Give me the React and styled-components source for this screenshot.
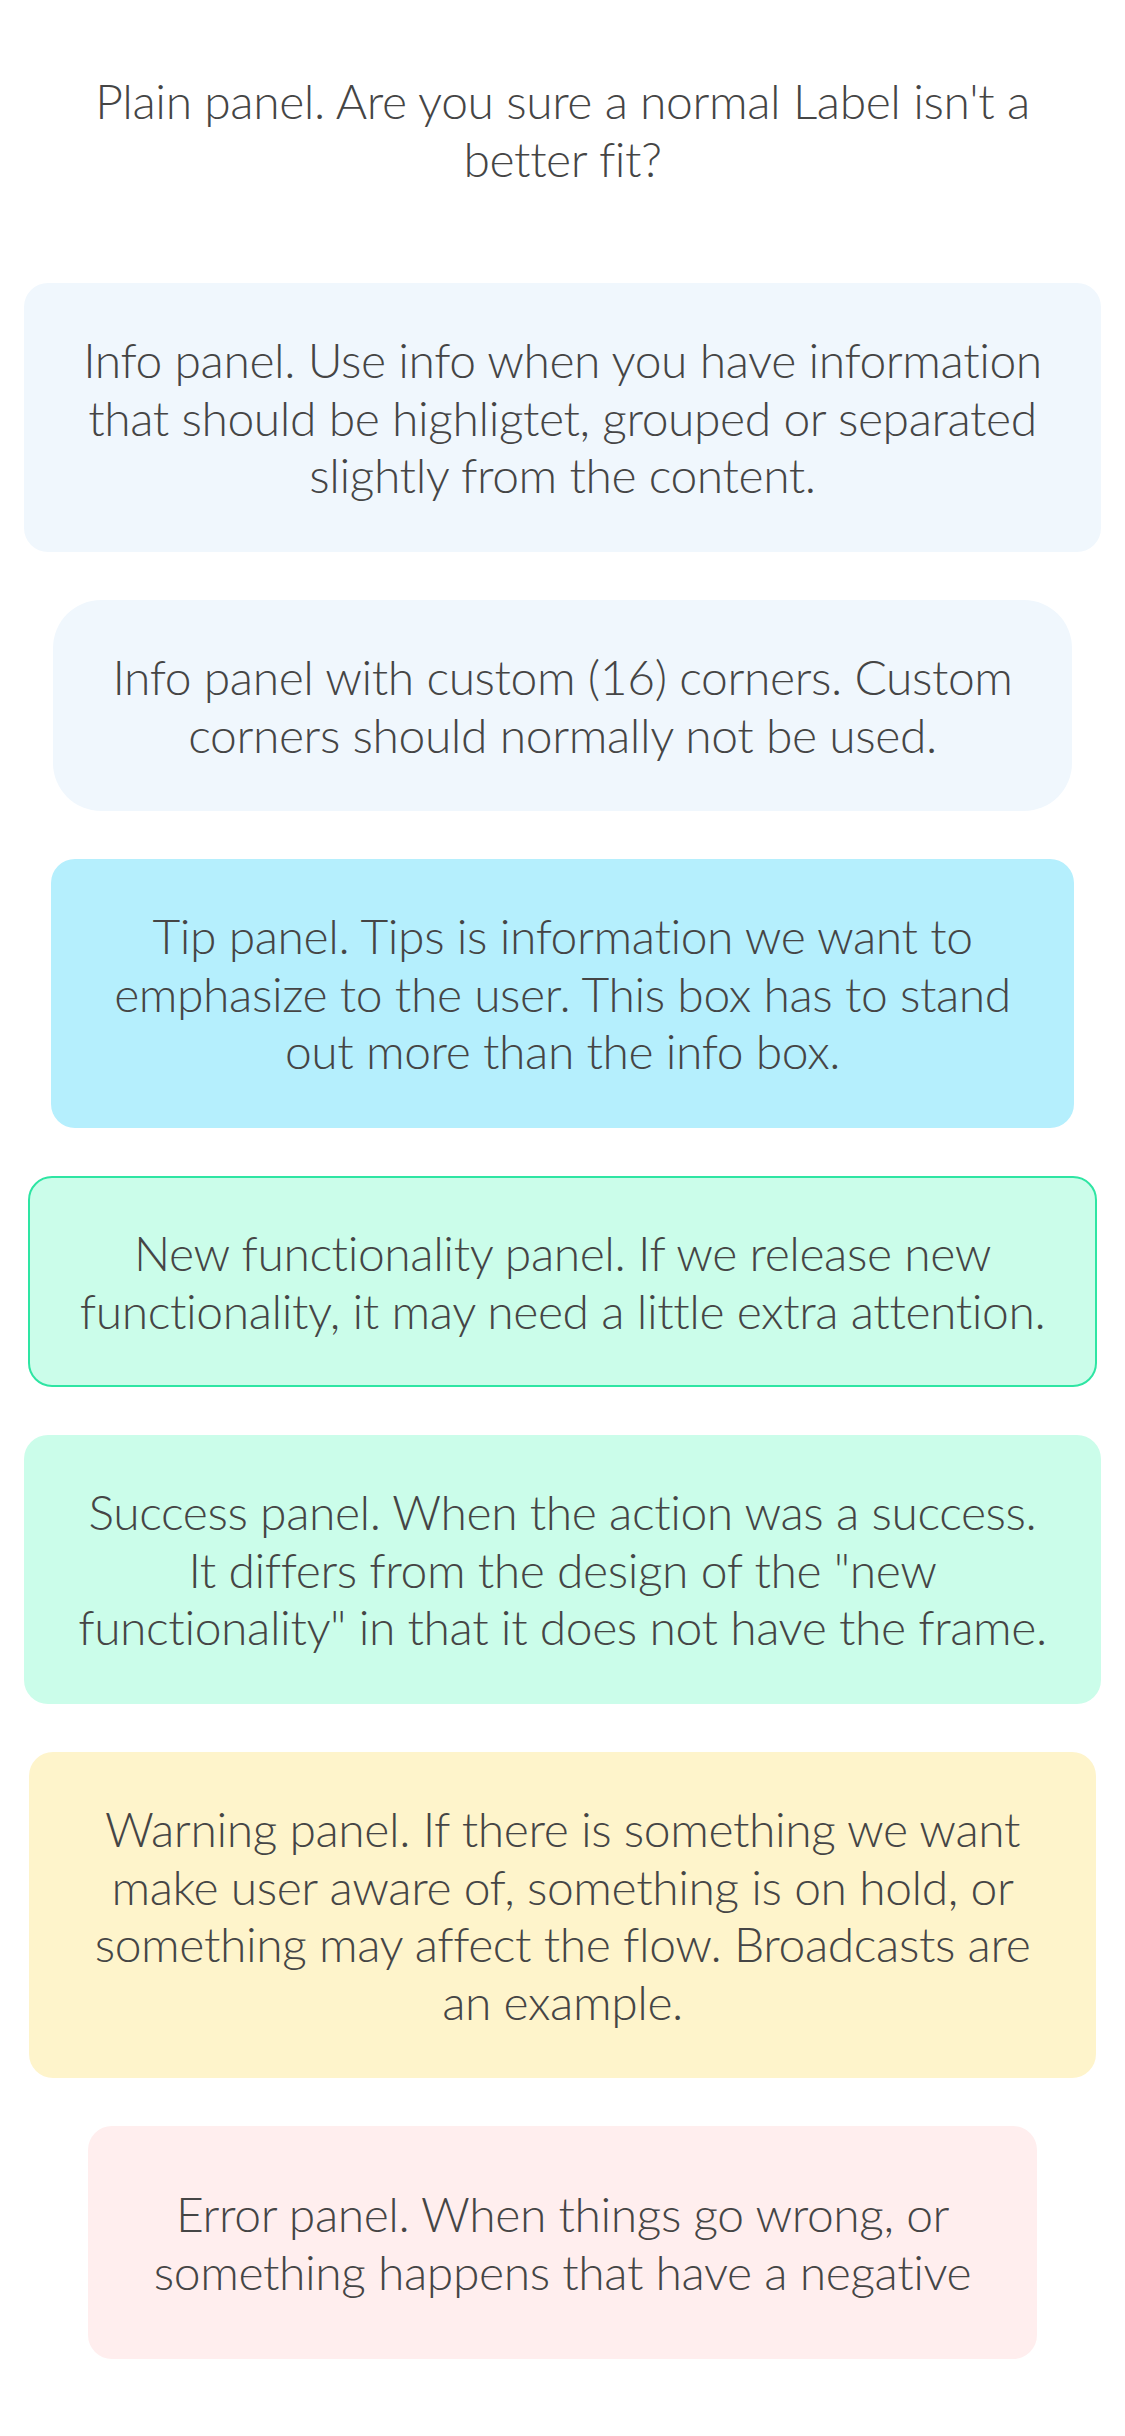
import React from 'react'
import styled, { createGlobalStyle } from 'styled-components'

const Global = createGlobalStyle`
  body {
    margin: 0;
    background: #ffffff;
    font-family: Lato, "Liberation Sans", sans-serif;
  }
`

const Page = styled.div`
  display: flex;
  flex-direction: column;
  gap: 48px;
  padding: 24px 0 72px;
`

const tones = {
  plain: { bg: 'transparent', border: 'transparent' },
  info: { bg: '#f0f7fd', border: 'transparent' },
  tip: { bg: '#b5effd', border: 'transparent' },
  news: { bg: '#cbfdea', border: '#2ee5a3' },
  success: { bg: '#cbfdea', border: 'transparent' },
  warning: { bg: '#fef4cb', border: 'transparent' },
  error: { bg: '#ffeeee', border: 'transparent' },
}

const Panel = styled.div`
  margin: 0 ${p => p.$inset || 24}px;
  padding: ${p => p.$padY || 48}px 48px;
  border-radius: ${p => p.$radius || 24}px;
  background: ${p => tones[p.$tone].bg};
  border: ${p => (p.$tone === 'news' ? `2px solid ${tones.news.border}` : 'none')};
  ${p => p.$tone === 'news' && 'padding: 46px 44px;'}
`

const Text = styled.p`
  margin: 0;
  font-size: 48px;
  font-weight: 300;
  line-height: 1.2;
  letter-spacing: -0.4px;
  font-variant-ligatures: none;
  color: #454545;
  text-align: center;
`

const panels = [
  { tone: 'plain', text: "Plain panel. Are you sure a normal Label isn't a better fit?" },
  { tone: 'info', text: 'Info panel. Use info when you have information that should be highligtet, grouped or separated slightly from the content.' },
  { tone: 'info', inset: 53, radius: 48, text: 'Info panel with custom (16) corners. Custom corners should normally not be used.' },
  { tone: 'tip', inset: 51, text: 'Tip panel. Tips is information we want to emphasize to the user. This box has to stand out more than the info box.' },
  { tone: 'news', inset: 28, text: 'New functionality panel. If we release new functionality, it may need a little extra attention.' },
  { tone: 'success', text: 'Success panel. When the action was a success. It differs from the design of the "new functionality" in that it does not have the frame.' },
  { tone: 'warning', inset: 29, text: 'Warning panel. If there is something we want make user aware of, something is on hold, or something may affect the flow. Broadcasts are an example.' },
  { tone: 'error', inset: 88, padY: 59, text: 'Error panel. When things go wrong, or something happens that have a negative' },
]

export default function App() {
  return (
    <>
      <Global />
      <Page>
        {panels.map((p, i) => (
          <Panel key={i} $tone={p.tone} $inset={p.inset} $radius={p.radius} $padY={p.padY}>
            <Text>{p.text}</Text>
          </Panel>
        ))}
      </Page>
    </>
  )
}
